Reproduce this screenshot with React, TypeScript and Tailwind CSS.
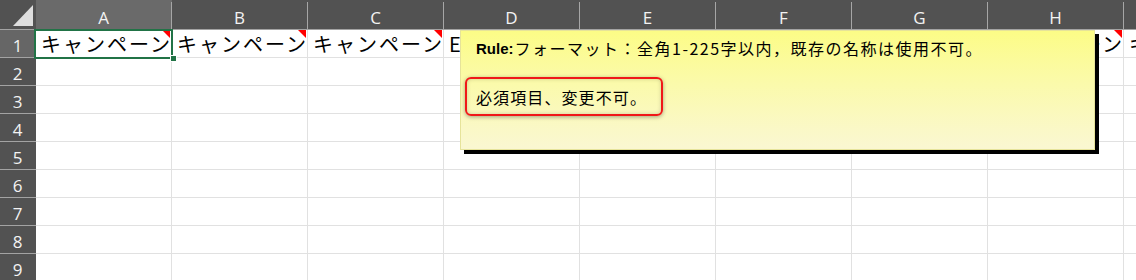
import React from "react";

const COLS = ["A", "B", "C", "D", "E", "F", "G", "H", "I"];
const ROWS = [1, 2, 3, 4, 5, 6, 7, 8, 9];

const row1Text: Record<string, string> = {
  A: "キャンペーン名",
  B: "キャンペーン名",
  C: "キャンペーン名",
  D: "Eメール配信",
  E: "",
  F: "",
  G: "",
  H: "キャンペーン",
  I: "キャンペーン名",
};

function RedMark() {
  return (
    <svg className="absolute right-[1px] top-0" width="8" height="8" viewBox="0 0 8 8">
      <polygon points="0,0 8,0 8,8" fill="#ff0000" />
    </svg>
  );
}

export default function App() {
  return (
    <div
      className="relative w-[1136px] h-[280px] overflow-hidden bg-white"
      style={{ fontFamily: '"Open Sans", "Noto Sans", sans-serif' }}
    >
      {/* header row */}
      <div className="flex h-[30px] border-b border-[#a3a3a3] bg-[#525252]">
        <div className="flex w-[36px] shrink-0 h-[29px]">
          <div className="flex-1 flex items-end justify-end pb-[3px] pr-[3px]">
            <svg width="20" height="21" viewBox="0 0 20 21">
              <polygon points="0,21 20,21 20,0" fill="#dedede" />
            </svg>
          </div>
        </div>
        {COLS.map((c, i) => (
          <div
            key={c}
            className={`flex w-[136px] shrink-0 h-[29px] ${i === 0 ? "bg-[#6a6a6a]" : ""}`}
          >
            <div className="flex-1 flex items-center justify-center pt-[5px] text-[17px] text-[#f3f3f3] leading-none">
              {c}
            </div>
            <div className="w-px self-end h-[27px] bg-[#a6a6a6]" />
          </div>
        ))}
      </div>

      {/* rows */}
      {ROWS.map((r) => (
        <div key={r} className="flex h-[28px]">
          <div
            className={`w-[36px] shrink-0 h-[28px] flex flex-col ${
              r === 1 ? "bg-[#666666]" : "bg-[#525252]"
            }`}
          >
            <div className="flex-1 flex items-center justify-center pt-[3px] pr-[1px] text-[17px] text-[#f3f3f3] leading-none">
              {r}
            </div>
            <div className="h-px bg-[#a3a3a3]" />
          </div>
          {COLS.map((c) => (
            <div
              key={c}
              className="relative w-[136px] shrink-0 h-[28px] border-r border-b border-[#e1e1e1] overflow-hidden"
            >
              {r === 1 && row1Text[c] !== "" && (
                <>
                  <div
                    className="h-full flex items-center pl-[5px] whitespace-nowrap text-[20px] tracking-[2px] text-black leading-none"
                    style={{ fontFamily: '"Noto Sans CJK JP", sans-serif' }}
                  >
                    {row1Text[c]}
                  </div>
                  {c !== "I" && <RedMark />}
                </>
              )}
            </div>
          ))}
        </div>
      ))}

      {/* selection A1 */}
      <div className="absolute left-[34px] top-[29px] w-[139px] h-[30px] border-2 border-[#217346]" />
      <div className="absolute left-[170px] top-[55px] w-[5px] h-[5px] bg-[#217346] border border-white box-content" />

      {/* comment box */}
      <div
        className="absolute left-[460px] top-[30px] w-[635px] h-[120px] border border-[#e6e39a] shadow-[4px_4px_0_0_#000] bg-gradient-to-b from-[#fcfc86] to-[#faf7d2] pl-[4px] pt-[7px]"
        style={{ fontFamily: '"Noto Sans CJK JP", sans-serif' }}
      >
        <div className="ml-[11px] h-[20px] flex items-center whitespace-nowrap text-[16px] tracking-[1.5px] text-black leading-none">
          <span
            className="font-bold tracking-normal mr-[1px]"
            style={{ fontFamily: '"Liberation Sans", sans-serif', fontSize: "15px" }}
          >
            Rule:
          </span>
          <span>フォーマット：全角1-225字以内，既存の名称は使用不可。</span>
        </div>
        <div className="mt-[19px] w-[198px] h-[39px] rounded-[6px] border-2 border-[#f01818] shadow-[0_1px_4px_rgba(0,0,0,0.35),inset_0_0_4px_rgba(0,0,0,0.18)] flex items-center pl-[9px] whitespace-nowrap text-[16px] tracking-[1.1px] text-black leading-none">
          必須項目、変更不可。
        </div>
      </div>
    </div>
  );
}
